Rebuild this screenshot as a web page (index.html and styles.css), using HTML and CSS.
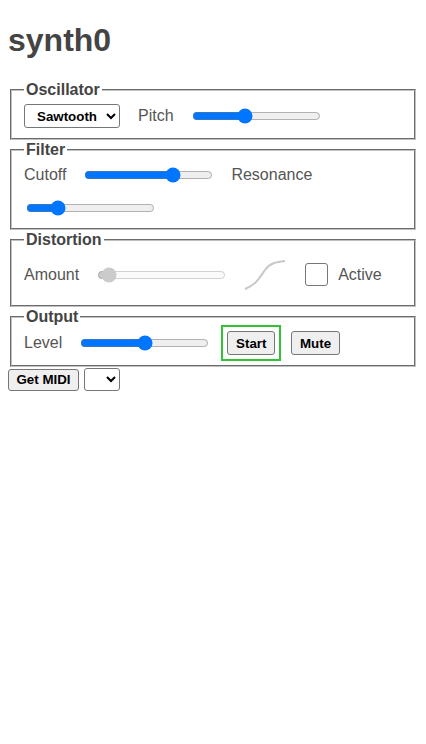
FILE: index.html
```html
<!DOCTYPE html>
<html>
<head>
<meta charset="utf-8">
<title>synth0</title>
<link rel="stylesheet" href="styles.css">
</head>
<body>
<h1 class="title">synth0</h1>
<fieldset class="panel">
  <legend class="panel-title">Oscillator</legend>
  <div class="row">
    <select class="picker picker-wave"><option>Sawtooth</option><option>Sine</option><option>Square</option><option>Triangle</option></select>
    <span class="lbl">Pitch</span>
    <input class="slider" type="range" min="0" max="100" value="40">
  </div>
</fieldset>
<fieldset class="panel">
  <legend class="panel-title">Filter</legend>
  <div class="row row-filter">
    <span class="lbl">Cutoff</span>
    <input class="slider" type="range" min="0" max="100" value="71">
    <span class="lbl">Resonance</span>
    <input class="slider" type="range" min="0" max="100" value="21">
  </div>
</fieldset>
<fieldset class="panel">
  <legend class="panel-title">Distortion</legend>
  <div class="row">
    <span class="lbl">Amount</span>
    <input class="slider" type="range" min="0" max="100" value="3" disabled>
    <svg class="curve" width="42" height="40" viewBox="0 0 42 40"><path d="M1 34 C 12 30, 16 22, 21 15 S 32 7, 41 6" fill="none" stroke="#c8c8c8" stroke-width="2"/></svg>
    <span class="check-wrap"><input class="check" type="checkbox"><span class="lbl">Active</span></span>
  </div>
</fieldset>
<fieldset class="panel panel-output">
  <legend class="panel-title">Output</legend>
  <div class="row">
    <span class="lbl">Level</span>
    <input class="slider" type="range" min="0" max="100" value="50">
    <span class="focus-ring"><button class="btn">Start</button></span>
    <button class="btn">Mute</button>
  </div>
</fieldset>
<div class="midi">
  <button class="btn-small">Get MIDI</button>
  <select class="picker picker-small"><option></option></select>
</div>
</body>
</html>
```
FILE: styles.css
```css
html, body {
  background: #ffffff;
}
body {
  margin: 8px;
  font-family: "Liberation Sans", Arial, sans-serif;
  color: #444444;
}
.title {
  font-size: 32px;
  font-weight: bold;
  margin: 14.44px 0 21.44px;
  color: #444444;
}
.panel {
  margin: 0 2px;
  padding: 5.6px 12px 10px;
  border: 2px groove #c0c0c0;
}
.panel + .panel {
  margin-top: 1px;
}
.panel-title {
  font-size: 16px;
  font-weight: bold;
  color: #444444;
  padding: 0 2px;
}
.row {
  display: flex;
  flex-wrap: wrap;
  align-items: center;
  column-gap: 16px;
  row-gap: 13px;
}
.lbl {
  font-size: 16px;
  color: #555555;
}
.slider {
  width: 129px;
  margin: 2px;
}
.picker {
  font-family: "Liberation Sans", Arial, sans-serif;
  font-size: 13.33px;
  font-weight: bold;
  height: 24px;
  padding: 0 4px 0 8px;
  color: #000;
  background: #fff;
  border: 1px solid #767676;
  border-radius: 3px;
}
.picker-wave {
  width: 96px;
  margin-right: 2px;
}
.picker-small {
  width: 36px;
  height: 23px;
}
.curve {
  display: block;
}
.check-wrap {
  display: flex;
  align-items: center;
  gap: 10px;
  margin-left: 3px;
}
.check {
  appearance: none;
  width: 23px;
  height: 23px;
  margin: 0;
  border: 1px solid #767676;
  border-radius: 3px;
  background: #fff;
}
.focus-ring {
  display: flex;
  margin: -6px;
  padding: 4px;
  border: 2px solid #33c233;
}
.btn {
  font-family: "Liberation Sans", Arial, sans-serif;
  font-size: 13.33px;
  font-weight: bold;
  color: #000;
  padding: 3px 7.8px;
  height: 24px;
  border: 1px solid #767676;
  border-radius: 3px;
  background: #efefef;
}
.midi {
  display: flex;
  align-items: center;
  gap: 5px;
  margin-top: 1px;
}
.btn-small {
  font-family: "Liberation Sans", Arial, sans-serif;
  font-size: 13.33px;
  font-weight: bold;
  color: #000;
  padding: 2px 7.5px;
  height: 22px;
  border: 1px solid #767676;
  border-radius: 3px;
  background: #efefef;
}
```
